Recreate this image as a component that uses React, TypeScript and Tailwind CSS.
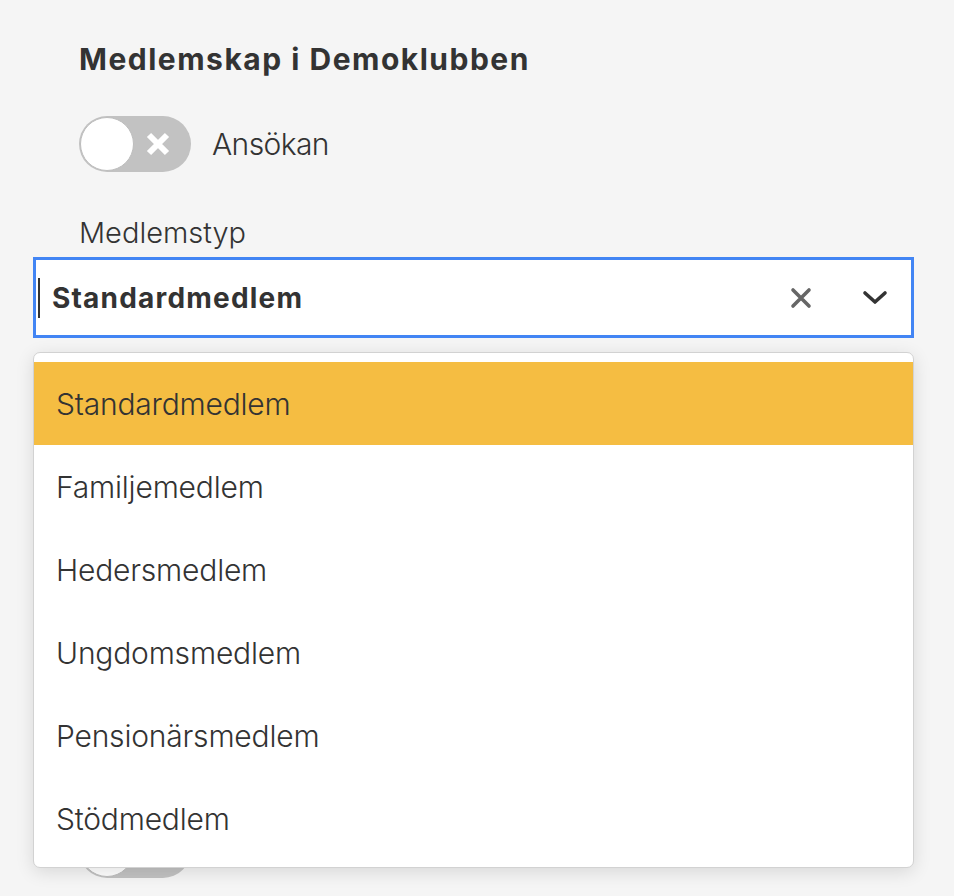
import React from "react";

function Toggle() {
  return (
    <div className="relative w-[112px] h-[56px] rounded-full bg-[#c2c2c2] shrink-0">
      <div className="absolute left-[1px] top-[1px] w-[54px] h-[54px] rounded-full bg-white border border-[#bdbdbd]" />
      <svg className="absolute left-[66px] top-[15px]" width="26" height="26" viewBox="0 0 26 26">
        <path d="M4 4 L22 22 M22 4 L4 22" stroke="#ffffff" strokeWidth="6" strokeLinecap="butt" />
      </svg>
    </div>
  );
}

const options = [
  "Standardmedlem",
  "Familjemedlem",
  "Hedersmedlem",
  "Ungdomsmedlem",
  "Pensionärsmedlem",
  "Stödmedlem",
];

export default function App() {
  return (
    <div
      className="min-h-[896px] bg-[#f5f5f5] text-[#333333] px-[33px] pt-[41px] overflow-hidden"
      style={{ fontFamily: "Inter, 'Noto Sans', sans-serif" }}
    >
      <h1 className="pl-[46px] text-[30px] leading-[36px] font-bold tracking-[1.5px]">
        Medlemskap i Demoklubben
      </h1>
      <div className="pl-[46px] mt-[39px] flex items-center gap-[21px]">
        <Toggle />
        <span className="text-[30px] leading-[36px] font-light tracking-[-0.6px]">Ansökan</span>
      </div>
      <div className="pl-[46px] mt-[44px] text-[29px] leading-[34px] font-light">
        Medlemstyp
      </div>
      <div className="relative mt-[7px] w-[881px]">
        <div className="h-[81px] bg-white border-[3px] border-[#4285f4] flex items-center pl-[2px] pr-[23px]">
          <div className="w-[2px] h-[40px] bg-[#333333]" />
          <span className="ml-[12px] text-[28px] font-bold leading-[34px] tracking-[1.2px]">Standardmedlem</span>
          <div className="flex-1" />
          <svg width="22" height="22" viewBox="0 0 22 22" className="mr-[50px]">
            <path d="M3 3 L19 19 M19 3 L3 19" stroke="#666666" strokeWidth="3.6" strokeLinecap="round" />
          </svg>
          <svg width="26" height="16" viewBox="0 0 26 16">
            <path d="M3 3 L13 12 L23 3" stroke="#333333" strokeWidth="3.6" fill="none" strokeLinecap="round" strokeLinejoin="round" />
          </svg>
        </div>
        <div className="absolute left-0 right-0 top-[95px] z-10 bg-white border border-[#d2d2d2] rounded-[7px] shadow-[0_4px_18px_rgba(0,0,0,0.12)] pt-[9px] pb-[7px]">
          {options.map((o, i) => (
            <div
              key={o}
              className={
                "h-[83px] flex items-center pl-[22px] text-[30px] font-light leading-[36px] tracking-[-0.2px] " +
                (i === 0 ? "bg-[#f5bd42]" : "bg-white")
              }
            >
              {o}
            </div>
          ))}
        </div>
      </div>
      <div className="pl-[46px] mt-[484px]">
        <Toggle />
      </div>
    </div>
  );
}
